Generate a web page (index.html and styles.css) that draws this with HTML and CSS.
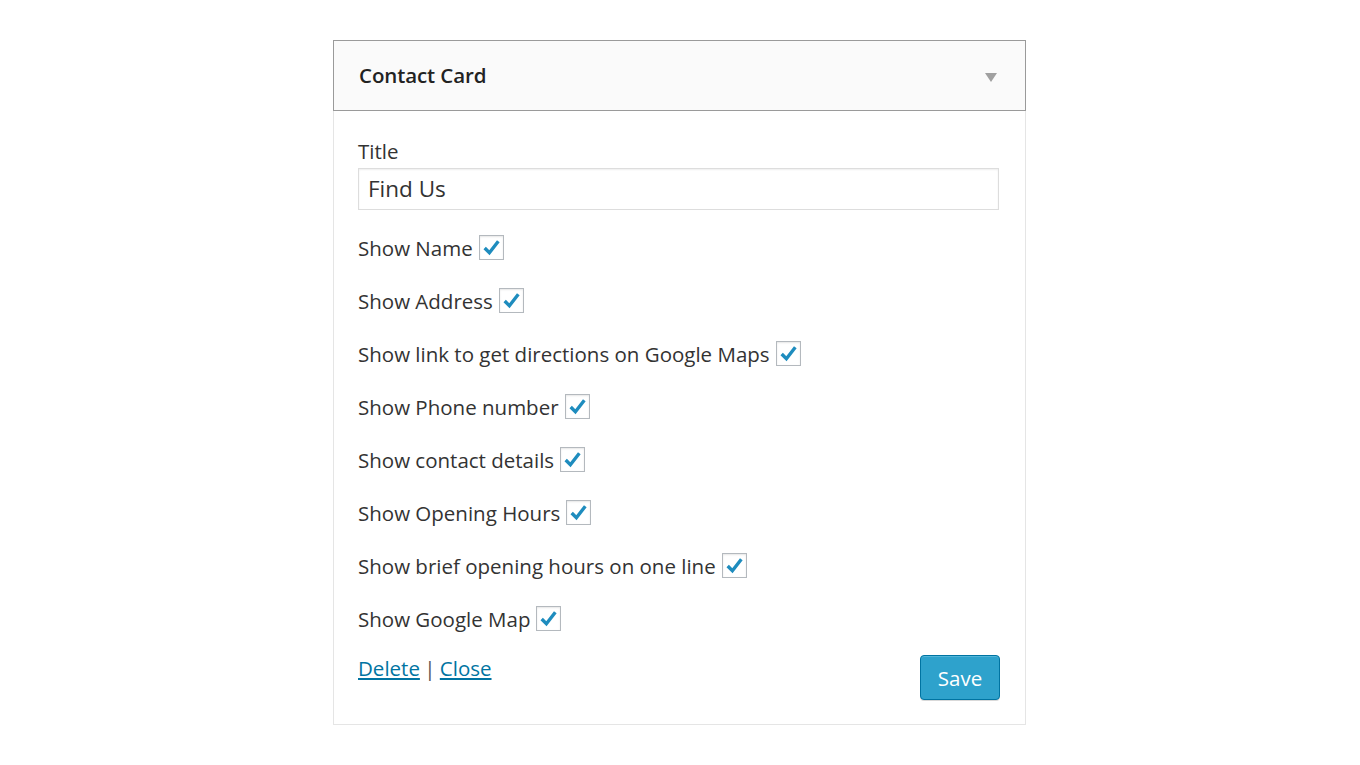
FILE: index.html
```html
<!DOCTYPE html>
<html>
<head>
<meta charset="utf-8">
<link rel="stylesheet" href="styles.css">
</head>
<body>
<div class="widget">
  <div class="widget-top">
    <h3 class="widget-title">Contact Card</h3>
    <span class="arrow"></span>
  </div>
  <div class="widget-inside">
    <label class="field-label">Title</label>
    <div class="input">Find Us</div>
    <div class="row">Show Name <span class="cb"><svg viewBox="0 0 20 20"><path d="M3.5 10.5 L8 15 L16.5 4" /></svg></span></div>
    <div class="row">Show Address <span class="cb"><svg viewBox="0 0 20 20"><path d="M3.5 10.5 L8 15 L16.5 4" /></svg></span></div>
    <div class="row">Show link to get directions on Google Maps <span class="cb"><svg viewBox="0 0 20 20"><path d="M3.5 10.5 L8 15 L16.5 4" /></svg></span></div>
    <div class="row">Show Phone number <span class="cb"><svg viewBox="0 0 20 20"><path d="M3.5 10.5 L8 15 L16.5 4" /></svg></span></div>
    <div class="row">Show contact details <span class="cb"><svg viewBox="0 0 20 20"><path d="M3.5 10.5 L8 15 L16.5 4" /></svg></span></div>
    <div class="row">Show Opening Hours <span class="cb"><svg viewBox="0 0 20 20"><path d="M3.5 10.5 L8 15 L16.5 4" /></svg></span></div>
    <div class="row">Show brief opening hours on one line <span class="cb"><svg viewBox="0 0 20 20"><path d="M3.5 10.5 L8 15 L16.5 4" /></svg></span></div>
    <div class="row">Show Google Map <span class="cb"><svg viewBox="0 0 20 20"><path d="M3.5 10.5 L8 15 L16.5 4" /></svg></span></div>
    <div class="controls">
      <div class="links"><a href="#">Delete</a> <span class="sep">|</span> <a href="#">Close</a></div>
      <button class="save">Save</button>
    </div>
  </div>
</div>
</body>
</html>
```
FILE: styles.css
```css
html, body {
  margin: 0;
  padding: 0;
  background: #fff;
}
body {
  font-family: "Open Sans", "Liberation Sans", sans-serif;
  color: #444;
  padding-top: 40px;
}
.widget {
  width: 693px;
  margin-left: 333px;
  box-sizing: border-box;
}
.widget-top {
  height: 71px;
  box-sizing: border-box;
  border: 1px solid #9a9a9a;
  background: #fafafa;
  display: flex;
  align-items: center;
  justify-content: space-between;
  padding: 0 28px 2px 25px;
}
.widget-title {
  margin: 0;
  font-size: 20.5px;
  font-weight: 600;
  color: #222;
  letter-spacing: -0.1px;
}
.arrow {
  width: 0;
  height: 0;
  border-left: 6px solid transparent;
  border-right: 6px solid transparent;
  border-top: 9px solid #a0a0a0;
  margin-top: 5px;
}
.widget-inside {
  border: 1px solid #e5e5e5;
  border-top: none;
  padding: 27px 25px 24px 24px;
  height: 614px;
  box-sizing: border-box;
}
.field-label {
  display: block;
  font-size: 20.5px;
  line-height: 26px;
  color: #333;
  margin-bottom: 4px;
}
.input {
  height: 42px;
  box-sizing: border-box;
  border: 1px solid #ddd;
  box-shadow: inset 0 1px 2px rgba(0,0,0,0.07);
  font-size: 22.5px;
  line-height: 40px;
  padding-left: 9px;
  color: #333;
  margin-right: 1px;
  margin-bottom: 11px;
}
.row {
  display: flex;
  align-items: center;
  font-size: 20.5px;
  height: 53px;
  color: #333;
}
.cb {
  width: 25px;
  height: 25px;
  box-sizing: border-box;
  border: 1px solid #b4b9be;
  box-shadow: inset 0 1px 2px rgba(0,0,0,0.1);
  margin-left: 6px;
  display: flex;
  align-items: center;
  justify-content: center;
  background: #fff;
}
.cb svg {
  width: 21px;
  height: 21px;
}
.cb path {
  fill: none;
  stroke: #1e8cbe;
  stroke-width: 3.2;
}
.controls {
  display: flex;
  justify-content: space-between;
  align-items: flex-start;
  margin-top: 10px;
}
.links {
  font-size: 20.5px;
  line-height: 26px;
}
.links a {
  color: #0074a2;
  text-decoration: underline;
}
.sep {
  color: #555;
  margin: 0 -1px;
}
.save {
  width: 80px;
  height: 45px;
  background: #2ea2cc;
  border: 1px solid #0074a2;
  border-radius: 4px;
  color: #fff;
  font-family: "Open Sans", "Liberation Sans", sans-serif;
  font-size: 20.5px;
  box-shadow: inset 0 1px 0 rgba(120,200,230,0.5), 0 1px 0 rgba(0,0,0,0.15);
  margin-top: 0;
  padding: 0;
}
```
